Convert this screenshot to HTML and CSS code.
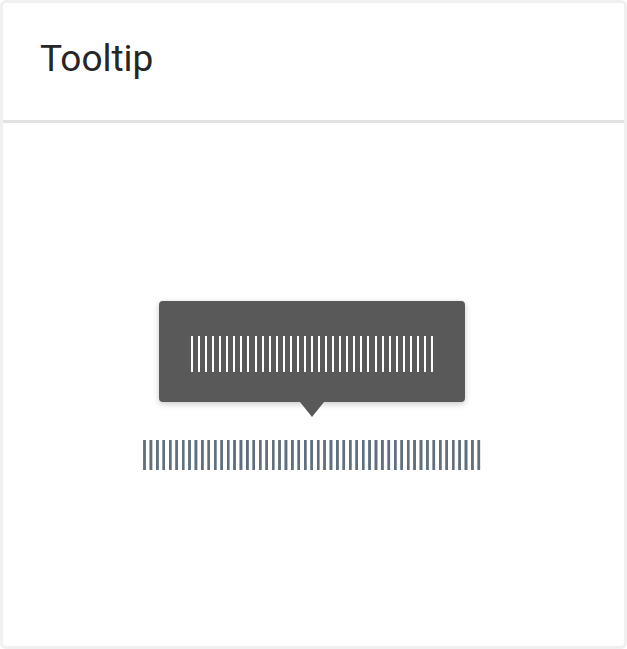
FILE: index.html
```html
<!DOCTYPE html>
<html>
<head>
<meta charset="utf-8">
<link rel="stylesheet" href="styles.css">
</head>
<body>
<div class="card">
  <div class="card-header"><h1 class="title">Tooltip</h1></div>
  <div class="card-body">
    <div class="demo">
      <div class="tooltip">
        <div class="tooltip-text" aria-label="tooltip text"></div>
        <div class="tooltip-arrow"></div>
      </div>
      <div class="target-text" aria-label="target text"></div>
    </div>
  </div>
</div>
</body>
</html>
```

FILE: styles.css
```css
html, body {
  margin: 0;
  padding: 0;
  background: #ffffff;
}
body {
  font-family: Roboto, "Liberation Sans", sans-serif;
}
.card {
  box-sizing: border-box;
  width: 627px;
  height: 649px;
  border: 3px solid #f0f0f0;
  border-radius: 6px;
  background: #ffffff;
  display: flex;
  flex-direction: column;
}
.card-header {
  box-sizing: border-box;
  height: 120px;
  padding: 36px 0 0 37px;
  border-bottom: 3px solid #e2e2e2;
}
.title {
  margin: 0;
  font-weight: 400;
  font-size: 37px;
  line-height: 40px;
  color: #262626;
}
.card-body {
  flex: 1;
  display: flex;
  align-items: center;
  justify-content: center;
}
.demo {
  display: flex;
  flex-direction: column;
  align-items: center;
  gap: 38px;
  margin-left: -3px;
  margin-top: 1px;
}
.tooltip {
  position: relative;
  background: #595959;
  border-radius: 4px;
  padding: 35px 32px 30px;
  box-shadow: 0 2px 6px rgba(0, 0, 0, 0.22);
}
.tooltip-text {
  width: 242px;
  height: 36px;
  background: repeating-linear-gradient(90deg, #ffffff 0, #ffffff 2px, transparent 2px, transparent 7.06px);
}
.tooltip-arrow {
  position: absolute;
  left: 50%;
  bottom: -15px;
  margin-left: -12px;
  width: 0;
  height: 0;
  border-left: 12px solid transparent;
  border-right: 12px solid transparent;
  border-top: 15px solid #595959;
}
.target-text {
  width: 338px;
  height: 30px;
  background: repeating-linear-gradient(90deg, #a9b4be 0, #5f6f7d 0.6px, #5f6f7d 2.4px, #a9b4be 3px, transparent 3.2px, transparent 6.43px);
}
```
